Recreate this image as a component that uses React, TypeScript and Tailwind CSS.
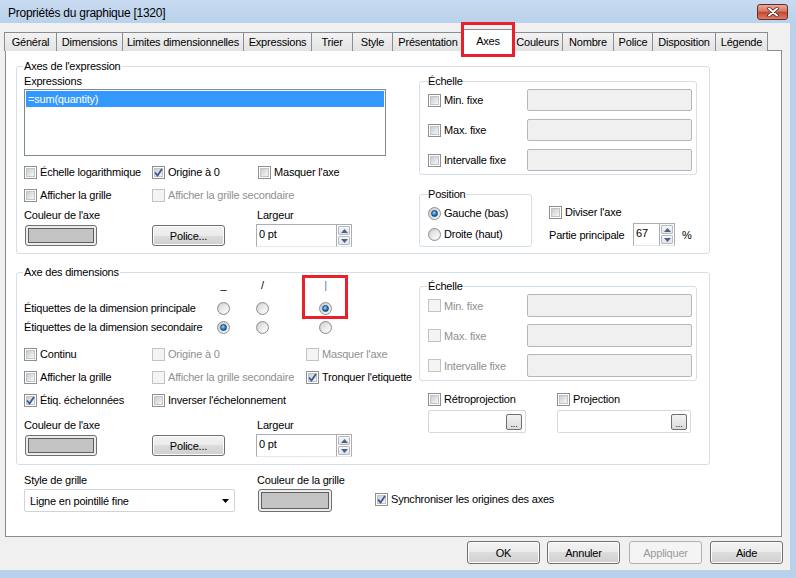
const btnBg =
  "border border-[#707070] rounded-[3px] bg-[linear-gradient(#f2f2f2,#ebebeb_50%,#dddddd_50%,#cfcfcf)] shadow-[inset_0_0_0_1px_#fcfcfc]";

function Check({ checked = false, disabled = false }: { checked?: boolean; disabled?: boolean }) {
  return (
    <span
      className={`relative flex h-[13px] w-[13px] shrink-0 items-center justify-center border ${
        disabled ? "border-[#c3c3c3] bg-[#f4f4f4]" : "border-[#8e8f8f] bg-white"
      }`}
    >
      <span
        className={`h-[9px] w-[9px] ${
          disabled ? "bg-[#f4f4f4]" : "border border-[#c2c4c8] bg-[linear-gradient(135deg,#c9ccd1,#f7f7f7)]"
        }`}
      />
      {checked && (
        <svg viewBox="0 0 13 13" className="absolute -left-px -top-px h-[13px] w-[13px]">
          <path d="M3 6.5 L5.5 9.5 L10 3" fill="none" stroke="#3b5893" strokeWidth="1.8" />
        </svg>
      )}
    </span>
  );
}

function CheckLabel({
  label,
  checked,
  disabled,
  className = "",
}: {
  label: string;
  checked?: boolean;
  disabled?: boolean;
  className?: string;
}) {
  return (
    <div className={`flex h-[16px] shrink-0 items-center gap-[3px] ${className}`}>
      <Check checked={checked} disabled={disabled} />
      <span className={disabled ? "text-[#8f8f8f]" : ""}>{label}</span>
    </div>
  );
}

function Radio({ on = false }: { on?: boolean }) {
  return (
    <span className="flex h-[13px] w-[13px] shrink-0 items-center justify-center rounded-full border border-[#8e8f8f] bg-[linear-gradient(135deg,#c8c9cb,#f8f8f8)]">
      <span
        className={
          on
            ? "h-[7px] w-[7px] rounded-full border border-[#17446f] bg-[radial-gradient(circle_at_40%_35%,#9bdcff,#1a78c8_55%,#0b3b68)]"
            : "h-[9px] w-[9px] rounded-full bg-[linear-gradient(135deg,#d6d6d6,#ffffff)]"
        }
      />
    </span>
  );
}

function SpinBtn({ up }: { up?: boolean }) {
  return (
    <div className="flex flex-1 items-center justify-center border border-[#b8bcc2] rounded-[1px] bg-[linear-gradient(#f6f6f6,#dfe3e8)]">
      <svg viewBox="0 0 7 4" className="h-[4px] w-[7px]">
        <path d={up ? "M0 4 L3.5 0 L7 4 Z" : "M0 0 L3.5 4 L7 0 Z"} fill="#4d6185" />
      </svg>
    </div>
  );
}

function Spin({ value, field }: { value: string; field: string }) {
  return (
    <div className="flex h-[23px]">
      <div className={`h-full border border-[#abadb3] border-r-0 border-b-[#e3e9ef] bg-white pl-[2px] pt-[2px] ${field}`}>
        {value}
      </div>
      <div className="flex w-[16px] flex-col gap-px border border-[#abadb3] border-b-[#e3e9ef] bg-white p-px">
        <SpinBtn up />
        <SpinBtn />
      </div>
    </div>
  );
}

function ColorBtn({ className = "" }: { className?: string }) {
  return (
    <div className={`rounded-[3px] border border-[#707070] bg-[#ececec] p-[2px] ${className}`}>
      <div className="h-full w-full border border-[#5f5f5f] bg-[#c4c4c4]" />
    </div>
  );
}

function PushBtn({ label, className = "", disabled }: { label: string; className?: string; disabled?: boolean }) {
  return (
    <div
      className={`flex items-center justify-center ${
        disabled
          ? "rounded-[3px] border border-[#adb2b5] bg-[#f4f4f4] text-[#9a9a9a]"
          : btnBg
      } ${className}`}
    >
      {label}
    </div>
  );
}

function GrayInput({ className = "" }: { className?: string }) {
  return <div className={`rounded-[2px] border border-[#b4b7bd] bg-[#f0f0f0] ${className}`} />;
}

function BrowseInput({ className = "" }: { className?: string }) {
  return (
    <div className={`flex h-[23px] items-center justify-end rounded-[2px] border border-[#d5d8de] bg-white pr-[3px] ${className}`}>
      <div className="flex h-[16px] w-[16px] items-end justify-center rounded-[2px] border border-[#707070] bg-[linear-gradient(#f2f2f2,#dcdcdc)] text-[9px] leading-[10px]">
        ...
      </div>
    </div>
  );
}

function Echelle({ disabled }: { disabled?: boolean }) {
  const rows = ["Min. fixe", "Max. fixe", "Intervalle fixe"];
  return (
    <fieldset className="w-[278px] rounded-[3px] border border-[#d5dfe5]">
      <legend className="ml-[8px]">Échelle</legend>
      <div className={`flex flex-col pl-[8px] pt-px pb-[3px] ${disabled ? "gap-[7px]" : "gap-[8px]"}`}>
        {rows.map((r) => (
          <div key={r} className="flex items-center">
            <CheckLabel label={r} disabled={disabled} className="w-[99px]" />
            <GrayInput className={`w-[165px] ${disabled ? "h-[23px]" : "h-[22px]"}`} />
          </div>
        ))}
      </div>
    </fieldset>
  );
}

const tabs: [string, string][] = [
  ["Général", "w-[53px] border-l"],
  ["Dimensions", "w-[66px]"],
  ["Limites dimensionnelles", "w-[121px]"],
  ["Expressions", "w-[68px]"],
  ["Trier", "w-[41px]"],
  ["Style", "w-[40px]"],
  ["Présentation", "w-[71px]"],
];
const tabs2: [string, string][] = [
  ["Couleurs", "w-[50px]"],
  ["Nombre", "w-[51px]"],
  ["Police", "w-[39px]"],
  ["Disposition", "w-[63px]"],
  ["Légende", "w-[52px]"],
];

function Tab({ label, cls }: { label: string; cls: string }) {
  return (
    <div
      className={`flex h-[19px] items-center justify-center border-t border-r border-[#898c95] bg-[linear-gradient(#f3f3f3,#e2e2e2)] ${cls}`}
    >
      {label}
    </div>
  );
}

export default function App() {
  return (
    <div className="flex h-[578px] w-[796px] flex-col overflow-hidden bg-[#b9d1ea] font-['Liberation_Sans',Arial,sans-serif] text-[11px] leading-[14px] tracking-[-0.2px] text-black">
      {/* title bar */}
      <div className="flex h-[23px] shrink-0 items-start justify-between bg-[linear-gradient(#c8dbf1,#b9d1ea)]">
        <span className="ml-[8px] mt-[5px] text-[12px] leading-[16px] tracking-[-0.25px]">
          Propriétés du graphique [1320]
        </span>
        <div className="mr-[8px] mt-[4px] flex h-[16px] w-[31px] items-center justify-center rounded-[3px] border border-[#6e2a20] bg-[linear-gradient(#e9a797,#d57a66_45%,#c4452e_50%,#d8806a)]">
          <svg viewBox="0 0 12 10" className="h-[10px] w-[12px]">
            <path d="M2 1.5 L10 8.5 M10 1.5 L2 8.5" stroke="#4a1a14" strokeWidth="3.4" strokeLinecap="round" />
            <path d="M2 1.5 L10 8.5 M10 1.5 L2 8.5" stroke="#ffffff" strokeWidth="2" strokeLinecap="round" />
          </svg>
        </div>
      </div>

      {/* client area */}
      <div className="flex h-[547px] w-[790px] flex-col bg-[#f0f0f0]">
        {/* tabs */}
        <div className="relative mt-[6px] flex h-[22px] items-end pl-[4px]">
          {tabs.map(([l, c]) => (
            <Tab key={l} label={l} cls={c} />
          ))}
          <div className="relative z-10 -ml-px flex h-[22px] w-[50px] justify-center border-x border-t border-[#898c95] bg-white pt-[4px]">
            Axes
          </div>
          {tabs2.map(([l, c]) => (
            <Tab key={l} label={l} cls={c} />
          ))}
          <div className="absolute left-[461px] top-[-7px] z-20 h-[35px] w-[54px] border-[3px] border-[#e8202a]" />
        </div>

        {/* panel */}
        <div className="-mt-px ml-[5px] flex h-[487px] w-[777px] flex-col border border-[#898c95] bg-white pl-[10px]">
          {/* Axes de l'expression */}
          <fieldset className="mt-[8px] w-[694px] rounded-[3px] border border-[#d5dfe5]">
            <legend className="ml-[6px] px-px">Axes de l'expression</legend>
            <div className="flex pl-[7px] pt-px pb-[6px]">
              <div className="flex w-[395px] flex-col">
                <div className="h-[14px]">Expressions</div>
                <div className="mt-px h-[67px] w-[362px] border border-[#828790] p-px">
                  <div className="h-[16px] bg-[#3399ff] pl-[2px] leading-[16px] text-white">=sum(quantity)</div>
                </div>
                <div className="mt-[8px] flex">
                  <CheckLabel label="Échelle logarithmique" className="w-[128px]" />
                  <CheckLabel label="Origine à 0" checked className="w-[106px]" />
                  <CheckLabel label="Masquer l'axe" />
                </div>
                <div className="mt-[7px] flex">
                  <CheckLabel label="Afficher la grille" className="w-[128px]" />
                  <CheckLabel label="Afficher la grille secondaire" disabled />
                </div>
                <div className="mt-[5px] flex h-[14px]">
                  <span className="w-[233px]">Couleur de l'axe</span>
                  <span>Largeur</span>
                </div>
                <div className="mt-[2px] flex h-[23px] items-start">
                  <ColorBtn className="ml-px mt-px h-[21px] w-[72px]" />
                  <PushBtn label="Police..." className="ml-[55px] mt-px h-[21px] w-[73px]" />
                  <div className="ml-[31px]">
                    <Spin value="0 pt" field="w-[80px]" />
                  </div>
                </div>
              </div>

              <div className="flex w-[278px] flex-col">
                <Echelle />
                <div className="mt-[12px] flex">
                  <fieldset className="w-[113px] rounded-[3px] border border-[#d5dfe5]">
                    <legend className="ml-[8px]">Position</legend>
                    <div className="flex flex-col gap-[5px] pl-[8px] pt-[4px] pb-[4px]">
                      <div className="flex h-[16px] items-center gap-[3px]">
                        <Radio on />
                        <span>Gauche (bas)</span>
                      </div>
                      <div className="flex h-[16px] items-center gap-[3px]">
                        <Radio />
                        <span>Droite (haut)</span>
                      </div>
                    </div>
                  </fieldset>
                  <div className="ml-[17px] flex flex-col pt-[17px]">
                    <CheckLabel label="Diviser l'axe" />
                    <div className="mt-[3px] flex items-center">
                      <span className="w-[84px]">Partie principale</span>
                      <Spin value="67" field="w-[26px]" />
                      <span className="ml-[7px]">%</span>
                    </div>
                  </div>
                </div>
              </div>
            </div>
          </fieldset>

          {/* Axe des dimensions */}
          <fieldset className="mt-[11px] w-[694px] rounded-[3px] border border-[#d5dfe5]">
            <legend className="ml-[6px] px-px">Axe des dimensions</legend>
            <div className="flex pl-[7px] pb-[7px]">
              <div className="flex w-[395px] flex-col">
                <div className="relative flex flex-col">
                  <div className="flex h-[12px] leading-[12px]">
                    <span className="w-[193px]" />
                    <span className="w-[13px] text-center">_</span>
                    <span className="ml-[26px] w-[13px] text-center">/</span>
                    <span className="ml-[50px] w-[13px] text-center text-[#3d7fd0]">|</span>
                  </div>
                  <div className="mt-[9px] flex h-[16px] items-center">
                    <span className="w-[193px]">Étiquettes de la dimension principale</span>
                    <Radio />
                    <span className="ml-[26px]">
                      <Radio />
                    </span>
                    <span className="ml-[50px]">
                      <Radio on />
                    </span>
                  </div>
                  <div className="mt-[3px] flex h-[16px] items-center">
                    <span className="w-[193px]">Étiquettes de la dimension secondaire</span>
                    <Radio on />
                    <span className="ml-[26px]">
                      <Radio />
                    </span>
                    <span className="ml-[50px]">
                      <Radio />
                    </span>
                  </div>
                  <div className="absolute left-[278px] top-[-4px] h-[44px] w-[46px] border-[3px] border-[#e8202a]" />
                </div>
                <div className="mt-[11px] flex">
                  <CheckLabel label="Continu" className="w-[128px]" />
                  <CheckLabel label="Origine à 0" disabled className="w-[154px]" />
                  <CheckLabel label="Masquer l'axe" disabled />
                </div>
                <div className="mt-[7px] flex">
                  <CheckLabel label="Afficher la grille" className="w-[128px]" />
                  <CheckLabel label="Afficher la grille secondaire" disabled className="w-[154px]" />
                  <CheckLabel label="Tronquer l'etiquette" checked />
                </div>
                <div className="mt-[7px] flex">
                  <CheckLabel label="Étiq. échelonnées" checked className="w-[128px]" />
                  <CheckLabel label="Inverser l'échelonnement" />
                </div>
                <div className="mt-[10px] flex h-[14px]">
                  <span className="w-[233px]">Couleur de l'axe</span>
                  <span>Largeur</span>
                </div>
                <div className="mt-[2px] flex h-[23px] items-start">
                  <ColorBtn className="ml-px mt-px h-[21px] w-[72px]" />
                  <PushBtn label="Police..." className="ml-[55px] mt-px h-[21px] w-[73px]" />
                  <div className="ml-[31px]">
                    <Spin value="0 pt" field="w-[80px]" />
                  </div>
                </div>
              </div>

              <div className="flex w-[278px] flex-col">
                <Echelle disabled />
                <div className="mt-[10px] flex pl-[9px]">
                  <CheckLabel label="Rétroprojection" className="w-[129px]" />
                  <CheckLabel label="Projection" />
                </div>
                <div className="mt-[3px] flex pl-[9px]">
                  <BrowseInput className="w-[98px]" />
                  <BrowseInput className="ml-[31px] w-[134px]" />
                </div>
              </div>
            </div>
          </fieldset>

          {/* grid style */}
          <div className="mt-[8px] flex flex-col pl-[8px]">
            <div className="flex h-[14px]">
              <span className="w-[233px]">Style de grille</span>
              <span>Couleur de la grille</span>
            </div>
            <div className="mt-[2px] flex items-start">
              <div className="flex h-[23px] w-[211px] items-center justify-between rounded-[2px] border border-[#d0d3d8] bg-white pl-[5px] pr-[5px]">
                <span>Ligne en pointillé fine</span>
                <svg viewBox="0 0 7 4" className="h-[4px] w-[7px]">
                  <path d="M0 0 L3.5 4 L7 0 Z" fill="#000" />
                </svg>
              </div>
              <ColorBtn className="ml-[23px] h-[23px] w-[74px]" />
              <CheckLabel label="Synchroniser les origines des axes" checked className="ml-[43px] mt-[2px]" />
            </div>
          </div>
        </div>

        {/* dialog buttons */}
        <div className="mt-[4px] flex">
          <PushBtn label="OK" className="ml-[467px] h-[23px] w-[73px]" />
          <PushBtn label="Annuler" className="ml-[7px] h-[23px] w-[73px]" />
          <PushBtn label="Appliquer" disabled className="ml-[9px] h-[23px] w-[73px]" />
          <PushBtn label="Aide" className="ml-[8px] h-[23px] w-[73px]" />
        </div>
      </div>
    </div>
  );
}
